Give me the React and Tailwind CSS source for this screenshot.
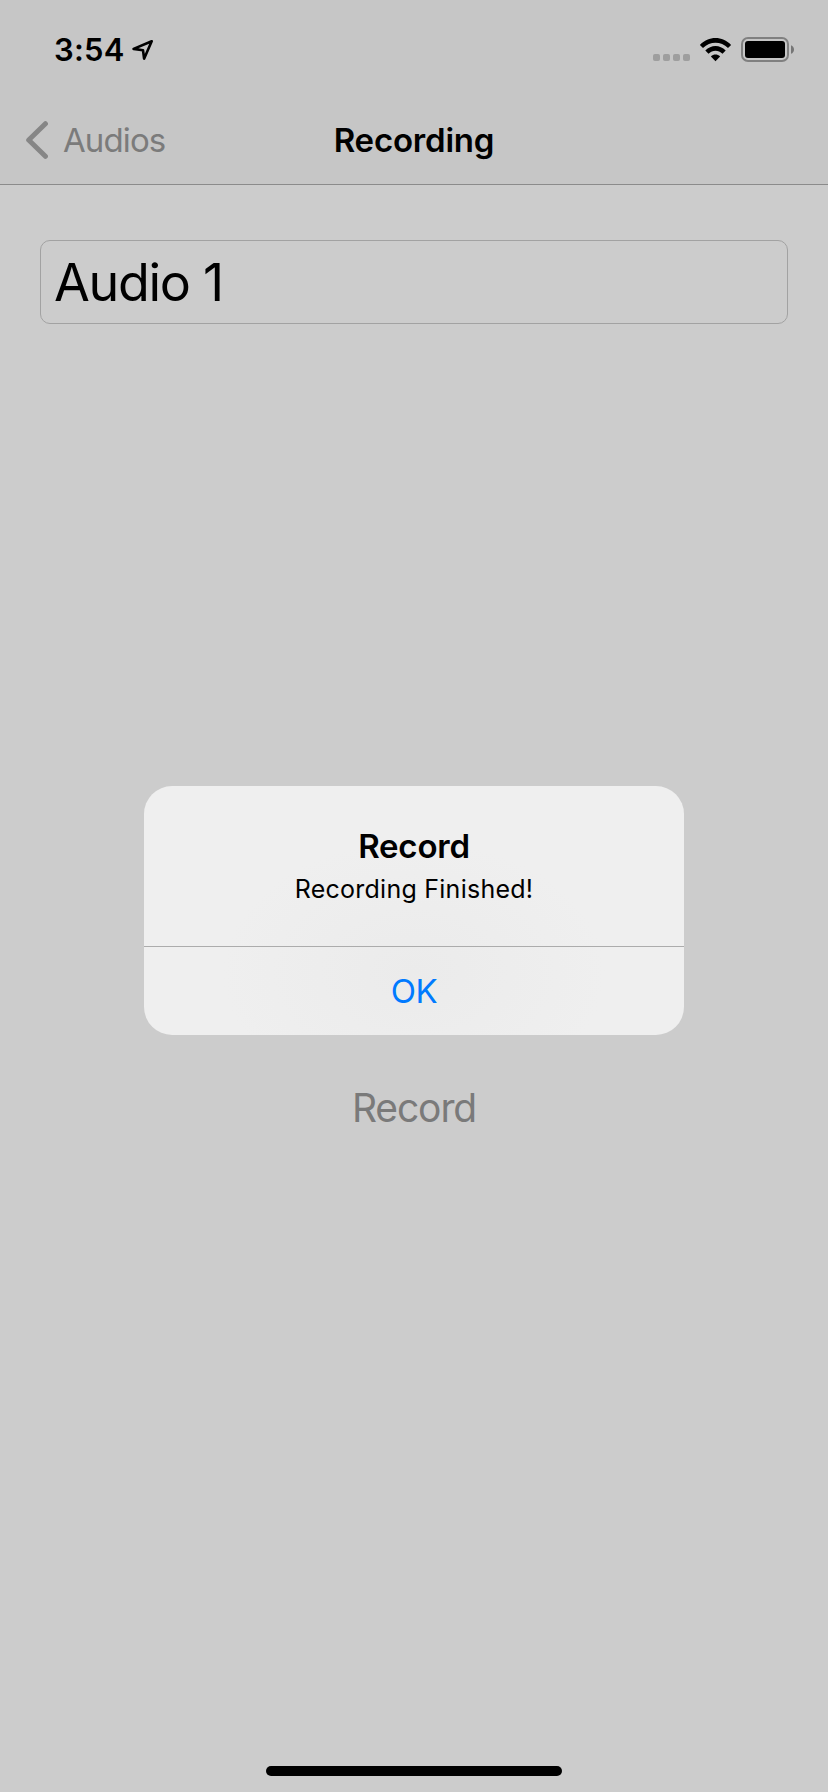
function LocationArrow() {
  return (
    <svg className="ml-[7px] h-[22px] w-[22px]" viewBox="0 0 22 22" fill="none" stroke="#000" strokeWidth="2.6" strokeLinejoin="round">
      <path d="M19.700 2.200 1.600 9.900l9.400 1.300 1.100 8.500z" />
    </svg>
  );
}

function WifiIcon() {
  return (
    <svg className="ml-[9px] h-[25px] w-[33px]" viewBox="0 0 33 25">
      <path d="M.9 7.9C9.5-1.4 23.5-1.4 32.1 7.9L29 11.1C22 3.9 11 3.9 4 11.1z" />
      <path d="M6.3 13.6c5.8-6 14.6-6 20.4 0l-3.2 3.2c-4.1-4-9.9-4-14 0z" />
      <path d="M11.9 19.4c2.7-2.5 6.5-2.5 9.2 0l-4.6 4.9z" />
    </svg>
  );
}

function BatteryIcon() {
  return (
    <svg className="ml-[9px] h-[25px] w-[54px]" viewBox="0 0 54 25">
      <rect x="1" y="1" width="46" height="23" rx="6" fill="none" stroke="#808080" strokeWidth="2" />
      <rect x="4" y="4" width="40" height="17" rx="3" />
      <path d="M50 8.2c4 1.400 4 7.200 0 8.600z" fill="#767676" />
    </svg>
  );
}

function StatusBar() {
  return (
    <div className="flex h-[99px] items-center justify-between pr-[33px] pl-[54px]">
      <div className="flex items-center">
        <span className="text-[31px] leading-10 font-semibold tracking-[0.2px]">3:54</span>
        <LocationArrow />
      </div>
      <div className="flex items-center">
        <div className="flex gap-[3px] pt-[16px]">
          <i className="size-[7px] rounded-[2px] bg-[#9e9e9e]" />
          <i className="size-[7px] rounded-[2px] bg-[#9e9e9e]" />
          <i className="size-[7px] rounded-[2px] bg-[#9e9e9e]" />
          <i className="size-[7px] rounded-[2px] bg-[#9e9e9e]" />
        </div>
        <WifiIcon />
        <BatteryIcon />
      </div>
    </div>
  );
}

function NavBar() {
  return (
    <div className="grid h-[82px] grid-cols-3 items-center">
      <div className="flex items-center pl-[26px]">
        <svg className="h-[38px] w-[22px]" viewBox="0 0 22 38" fill="none" stroke="#868686" strokeWidth="5" strokeLinecap="round" strokeLinejoin="round">
          <path d="M19.400 2.700 2.700 19l16.700 16.300" />
        </svg>
        <span className="ml-[15px] text-[33px] leading-10 tracking-[-0.9px] text-[#7b7b7b]">Audios</span>
      </div>
      <h1 className="text-center text-[33px] leading-10 font-semibold tracking-[-0.2px]">Recording</h1>
    </div>
  );
}

export default function App() {
  return (
    <div className="flex h-[1792px] w-[828px] flex-col bg-[#cccccc] font-['Inter','Liberation_Sans',sans-serif] text-black">
      <header className="h-[185px] border-b border-[#8b8b8b] bg-[#c6c6c6]">
        <StatusBar />
        <NavBar />
      </header>
      <main className="flex grow flex-col items-center">
        <div className="mt-[55px] flex h-[84px] w-[748px] items-center rounded-[10px] border border-[#a2a2a2] pt-[2px] pl-[13px]">
          <span className="text-[52px] leading-[64px] tracking-[-1.3px]">Audio 1</span>
        </div>
        <section className="mt-[462px] flex h-[249px] w-[540px] flex-col overflow-hidden rounded-[28px] bg-[#efefef] bg-radial-[at_50%_75%] from-[#ebebeb] to-[#efefef] to-50% text-center">
          <div className="h-[161px] border-b border-[#acacac] pt-[40px]">
            <h2 className="text-[33px] leading-10 font-semibold tracking-[-0.2px]">Record</h2>
            <p className="mt-[7px] text-[25px] leading-8 tracking-[0.25px]">Recording Finished!</p>
          </div>
          <button className="grow text-[33px] leading-10 tracking-[-0.5px] text-[#007aff]">OK</button>
        </section>
        <button className="mt-[49px] text-[39px] leading-[48px] tracking-[-1.1px] text-[#7a7a7a]">Record</button>
        <div className="mt-auto mb-4 h-[10px] w-[296px] rounded-full bg-black" />
      </main>
    </div>
  );
}
